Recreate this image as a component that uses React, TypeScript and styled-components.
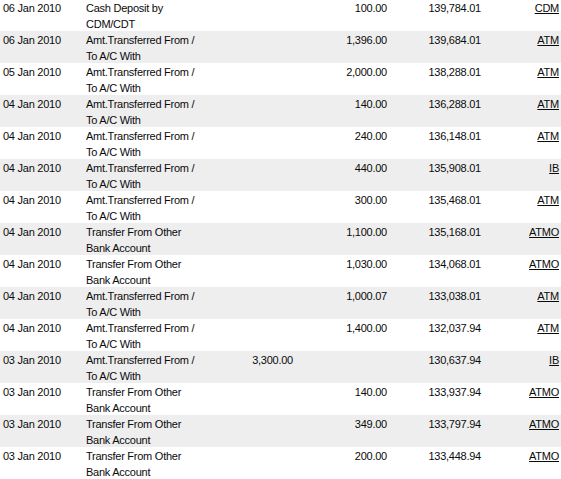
import React from "react";
import styled, { createGlobalStyle } from "styled-components";

const Global = createGlobalStyle`
  html, body { margin: 0; padding: 0; background: #ffffff; }
  body { font-family: "Liberation Sans", Arial, sans-serif; overflow: hidden; }
`;

const List = styled.div`
  width: 561px;
  margin-top: -1px;
  display: flex;
  flex-direction: column;
`;

const Row = styled.div<{ $alt: boolean }>`
  display: grid;
  grid-template-columns: 86px 115px 92px 94px 94px 78px;
  height: 32px;
  padding-top: 1px;
  box-sizing: border-box;
  background: ${(p) => (p.$alt ? "#eeeeee" : "#ffffff")};
  font-size: 11px;
  letter-spacing: -0.25px;
  line-height: 16px;
  color: #0a0a0a;
`;

const DateCell = styled.div`
  padding-left: 3px;
  white-space: nowrap;
`;

const DescCell = styled.div`
  overflow: hidden;
`;

const Amount = styled.div`
  text-align: right;
  white-space: nowrap;
`;

const LinkCell = styled.div`
  text-align: right;
  white-space: nowrap;
`;

const Channel = styled.a`
  color: #0a0a0a;
  text-decoration: underline;
  cursor: pointer;
`;

type Tx = {
  date: string;
  desc: string;
  debit: string;
  credit: string;
  balance: string;
  channel: string;
};

const AMT = "Amt.Transferred From / To A/C With";
const TOB = "Transfer From Other Bank Account";

const rows: Tx[] = [
  { date: "06 Jan 2010", desc: "Cash Deposit by CDM/CDT", debit: "", credit: "100.00", balance: "139,784.01", channel: "CDM" },
  { date: "06 Jan 2010", desc: AMT, debit: "", credit: "1,396.00", balance: "139,684.01", channel: "ATM" },
  { date: "05 Jan 2010", desc: AMT, debit: "", credit: "2,000.00", balance: "138,288.01", channel: "ATM" },
  { date: "04 Jan 2010", desc: AMT, debit: "", credit: "140.00", balance: "136,288.01", channel: "ATM" },
  { date: "04 Jan 2010", desc: AMT, debit: "", credit: "240.00", balance: "136,148.01", channel: "ATM" },
  { date: "04 Jan 2010", desc: AMT, debit: "", credit: "440.00", balance: "135,908.01", channel: "IB" },
  { date: "04 Jan 2010", desc: AMT, debit: "", credit: "300.00", balance: "135,468.01", channel: "ATM" },
  { date: "04 Jan 2010", desc: TOB, debit: "", credit: "1,100.00", balance: "135,168.01", channel: "ATMO" },
  { date: "04 Jan 2010", desc: TOB, debit: "", credit: "1,030.00", balance: "134,068.01", channel: "ATMO" },
  { date: "04 Jan 2010", desc: AMT, debit: "", credit: "1,000.07", balance: "133,038.01", channel: "ATM" },
  { date: "04 Jan 2010", desc: AMT, debit: "", credit: "1,400.00", balance: "132,037.94", channel: "ATM" },
  { date: "03 Jan 2010", desc: AMT, debit: "3,300.00", credit: "", balance: "130,637.94", channel: "IB" },
  { date: "03 Jan 2010", desc: TOB, debit: "", credit: "140.00", balance: "133,937.94", channel: "ATMO" },
  { date: "03 Jan 2010", desc: TOB, debit: "", credit: "349.00", balance: "133,797.94", channel: "ATMO" },
  { date: "03 Jan 2010", desc: TOB, debit: "", credit: "200.00", balance: "133,448.94", channel: "ATMO" },
];

export default function App() {
  return (
    <>
      <Global />
      <List>
        {rows.map((r, i) => (
          <Row key={i} $alt={i % 2 === 1}>
            <DateCell>{r.date}</DateCell>
            <DescCell>{r.desc}</DescCell>
            <Amount>{r.debit}</Amount>
            <Amount>{r.credit}</Amount>
            <Amount>{r.balance}</Amount>
            <LinkCell>
              <Channel>{r.channel}</Channel>
            </LinkCell>
          </Row>
        ))}
      </List>
    </>
  );
}
